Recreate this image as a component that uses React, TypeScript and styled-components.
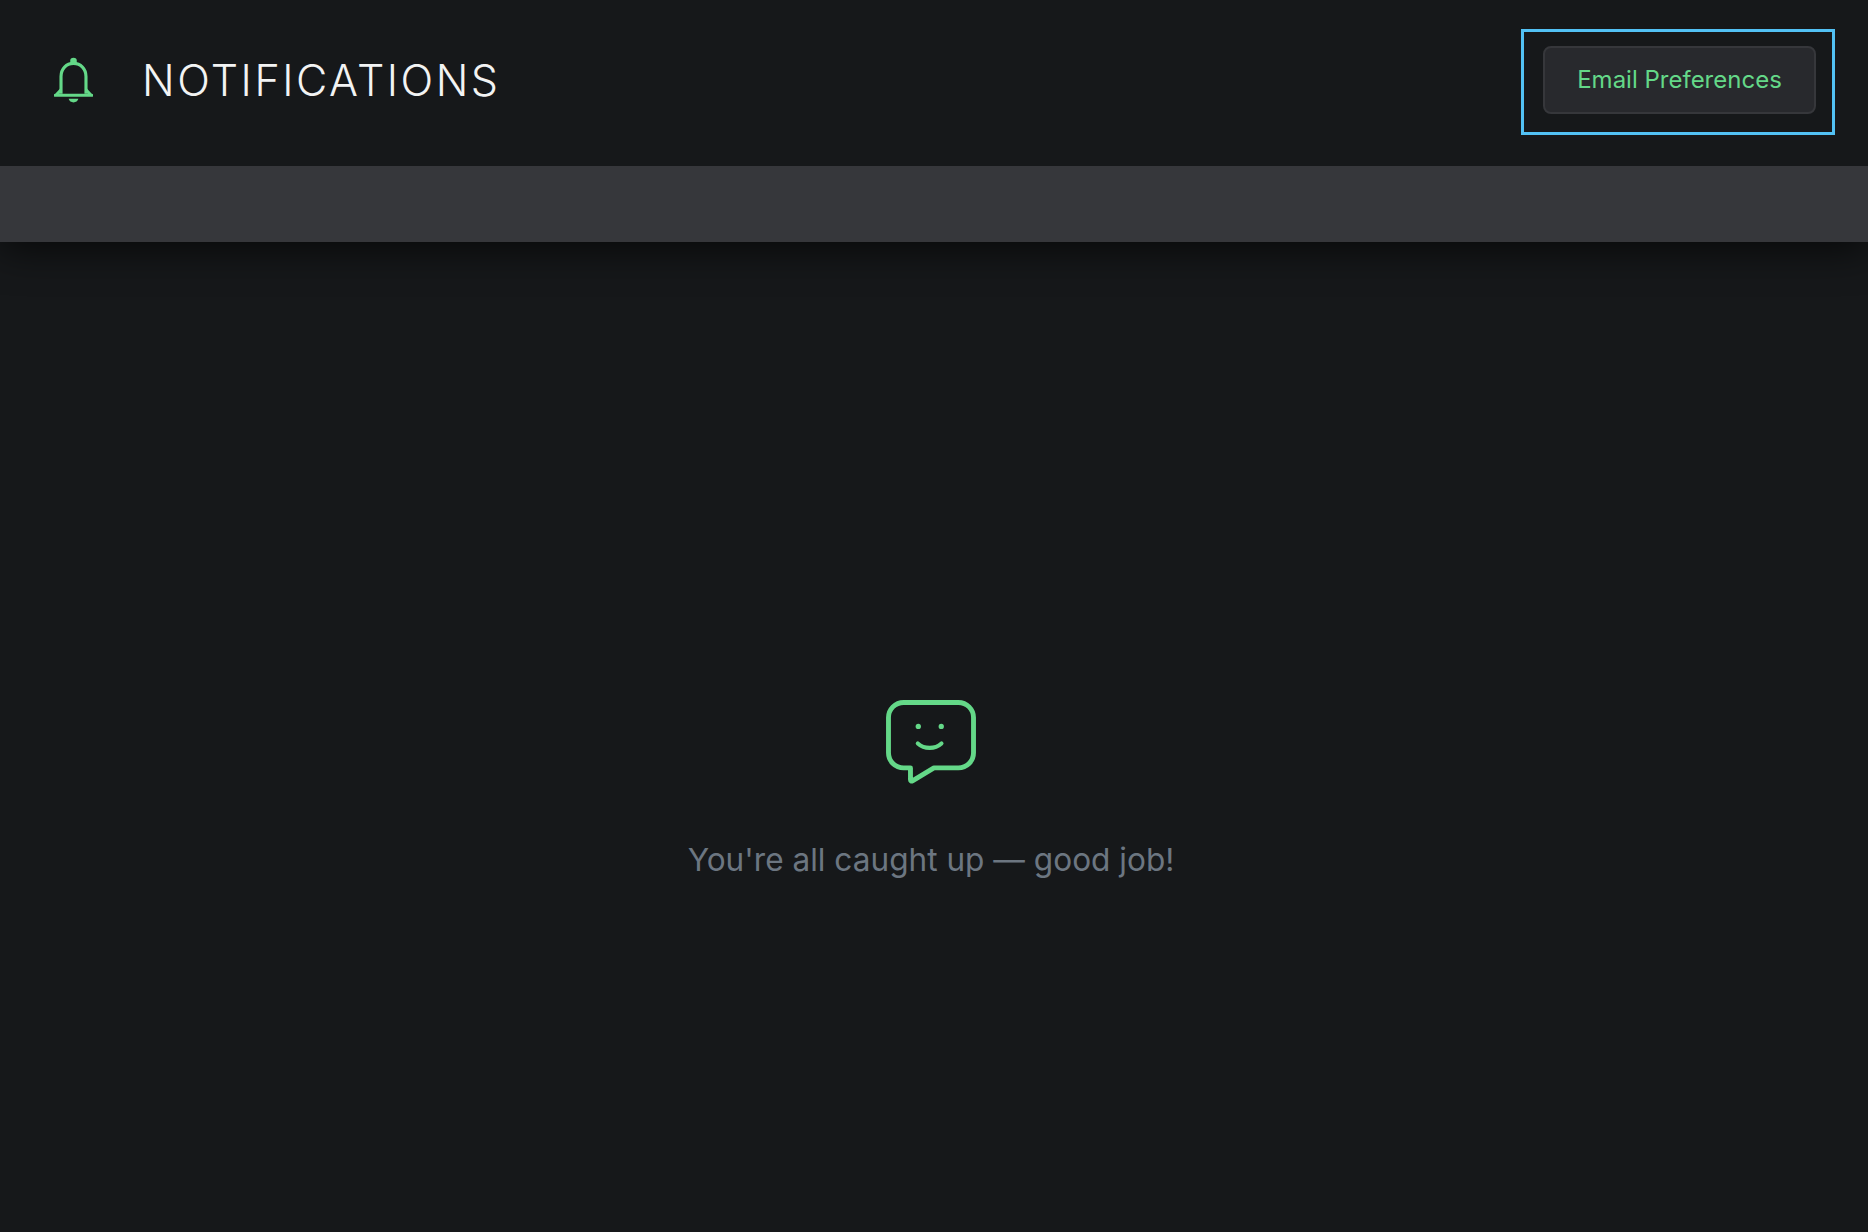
import React from 'react'

import styled, { createGlobalStyle } from 'styled-components'

const GlobalStyle = createGlobalStyle`
  html,
  body {
    margin: 0;
    padding: 0;
    height: 100%;
    background: #16181a;
  }

  #root {
    height: 100%;
  }
`

const Page = styled.div`
  display: flex;
  flex-direction: column;
  height: 1232px;
  overflow: hidden;
  background: #16181a;
  font-family: Inter, 'Liberation Sans', sans-serif;
`

const Header = styled.header`
  position: relative;
  z-index: 1;
  display: flex;
  align-items: center;
  justify-content: space-between;
  box-sizing: border-box;
  height: 166px;
  padding: 0 33px 6px 54px;
  background: #16181a;
`

const TitleGroup = styled.div`
  display: flex;
  align-items: center;
  gap: 49px;
`

const BellIcon = styled.svg`
  display: block;
  width: 39px;
  height: 46px;
  color: #64d888;
`

const Title = styled.h1`
  margin: 0;
  font-size: 43px;
  font-weight: 320;
  line-height: 50px;
  letter-spacing: 2.5px;
  color: #f2f3f3;
`

const FocusFrame = styled.div`
  display: flex;
  box-sizing: border-box;
  width: 314px;
  height: 106px;
  margin-top: 3px;
  padding: 14px 16px 18px 19px;
  border: 3px solid #52c1f4;
`

const PreferencesButton = styled.button`
  flex: 1;
  padding: 0;
  border: 2px solid #36373b;
  border-radius: 8px;
  background: #28292d;
  color: #64d888;
  font-family: inherit;
  font-size: 24px;
  font-weight: 400;
  cursor: pointer;
`

const SubBar = styled.div`
  flex: none;
  height: 76px;
  background: #36373b;
  box-shadow: 0 6px 40px rgba(0, 0, 0, 0.7);
`

const EmptyState = styled.main`
  flex: 1;
  display: flex;
  flex-direction: column;
  align-items: center;
  gap: 54px;
  padding: 458px 6px 0 0;
`

const BubbleIcon = styled.svg`
  display: block;
  width: 90px;
  height: 86px;
  color: #64d888;
`

const EmptyText = styled.p`
  margin: 0;
  font-size: 31.6px;
  line-height: 40px;
  font-weight: 400;
  color: #6c7681;
`

function Bell() {
  return (
    <BellIcon viewBox="0 0 40 46" fill="none" aria-hidden="true">
      <circle cx="20" cy="3.6" r="3.4" fill="currentColor" />
      <path
        d="M7.2 37V19.5C7.2 11.6 12.6 6 20 6s12.8 5.6 12.8 13.5V37"
        stroke="currentColor"
        strokeWidth="3.2"
      />
      <path d="M2.5 38.2 7.2 33M37.5 38.2 32.8 33" stroke="currentColor" strokeWidth="3.2" />
      <path d="M1.2 38.7h37.6" stroke="currentColor" strokeWidth="3.2" strokeLinecap="round" />
      <path d="M15 42.3h10c-.6 2.3-2.6 3.7-5 3.7s-4.4-1.4-5-3.7Z" fill="currentColor" />
    </BellIcon>
  )
}

function Bubble() {
  return (
    <BubbleIcon viewBox="0 0 92 88" fill="none" aria-hidden="true">
      <path
        d="M18 2.5h56c8.6 0 15.5 6.9 15.5 15.5v36c0 8.6-6.9 15.5-15.5 15.5H49L27 82.8c-.9.5-2 0-2-1.1V69.5h-7C9.4 69.5 2.5 62.6 2.5 54V18C2.5 9.4 9.4 2.5 18 2.5Z"
        stroke="currentColor"
        strokeWidth="5"
        strokeLinejoin="round"
      />
      <circle cx="33" cy="27" r="2.7" fill="currentColor" />
      <circle cx="56.5" cy="27" r="2.7" fill="currentColor" />
      <path d="M32.5 44.5c6.6 6 17.6 6 24.2 0" stroke="currentColor" strokeWidth="4.2" strokeLinecap="round" />
    </BubbleIcon>
  )
}

export default function App() {
  return (
    <Page>
      <GlobalStyle />
      <Header>
        <TitleGroup>
          <Bell />
          <Title>NOTIFICATIONS</Title>
        </TitleGroup>
        <FocusFrame>
          <PreferencesButton type="button">Email Preferences</PreferencesButton>
        </FocusFrame>
      </Header>
      <SubBar />
      <EmptyState>
        <Bubble />
        <EmptyText>You're all caught up — good job!</EmptyText>
      </EmptyState>
    </Page>
  )
}
